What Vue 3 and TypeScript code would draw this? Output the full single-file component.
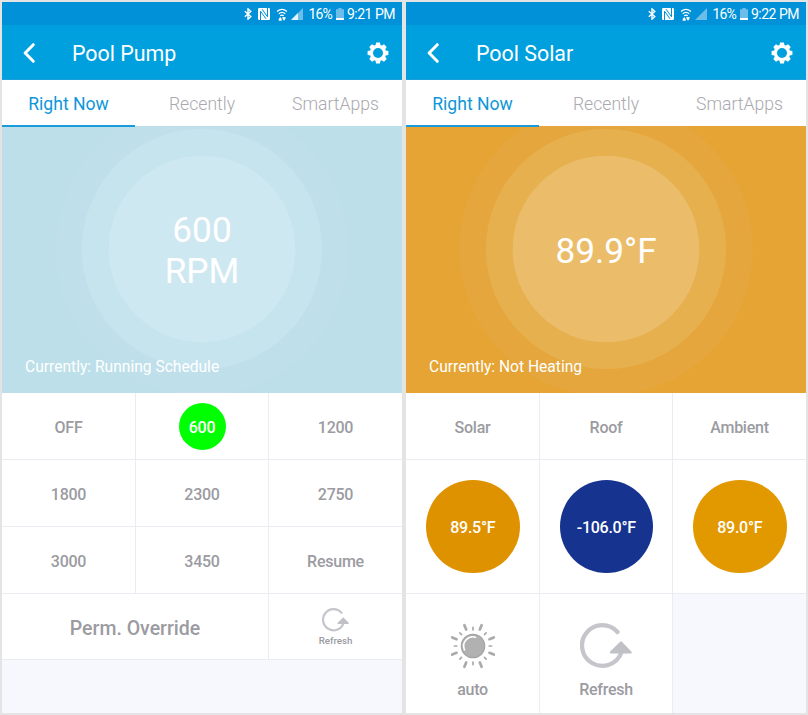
<script setup lang="ts">
interface Tile {
  label: string
  kind?: 'dot' | 'disc' | 'wide' | 'refresh' | 'sun'
  tone?: string
}

interface Device {
  id: string
  title: string
  time: string
  signal: boolean
  reading: string[]
  status: string
  tiles: Tile[]
}

const tabs: string[] = ['Right Now', 'Recently', 'SmartApps']

const devices: Device[] = [
  {
    id: 'pump',
    title: 'Pool Pump',
    time: '9:21 PM',
    signal: true,
    reading: ['600', 'RPM'],
    status: 'Currently: Running Schedule',
    tiles: [
      { label: 'OFF' },
      { label: '600', kind: 'dot' },
      { label: '1200' },
      { label: '1800' },
      { label: '2300' },
      { label: '2750' },
      { label: '3000' },
      { label: '3450' },
      { label: 'Resume' },
      { label: 'Perm. Override', kind: 'wide' },
      { label: 'Refresh', kind: 'refresh' },
    ],
  },
  {
    id: 'solar',
    title: 'Pool Solar',
    time: '9:22 PM',
    signal: false,
    reading: ['89.9°F'],
    status: 'Currently: Not Heating',
    tiles: [
      { label: 'Solar' },
      { label: 'Roof' },
      { label: 'Ambient' },
      { label: '89.5°F', kind: 'disc', tone: 'amber' },
      { label: '-106.0°F', kind: 'disc', tone: 'navy' },
      { label: '89.0°F', kind: 'disc', tone: 'gold' },
      { label: 'auto', kind: 'sun' },
      { label: 'Refresh', kind: 'refresh' },
    ],
  },
]

const longRays: number[] = [22.5, 67.5, 112.5, 157.5, 202.5, 247.5, 292.5, 337.5]
const shortRays: number[] = [0, 45, 90, 135, 180, 225, 270, 315]
const teeth: number[] = [0, 45, 90, 135, 180, 225, 270, 315]
</script>

<template>
  <main class="board">
    <section v-for="d in devices" :key="d.id" class="phone" :class="d.id">
      <div class="status">
        <svg class="bt" viewBox="0 0 8 12" width="8" height="12">
          <path d="M.8 3.200 6.800 8.600 4 11.200V.8l2.800 2.600L.8 8.800" fill="none" stroke="#fff" stroke-width="1.400" />
        </svg>
        <svg class="nfc" viewBox="0 0 12 12" width="12" height="12">
          <rect width="12" height="12" rx="1.200" fill="#fff" />
          <path d="M2.500 12V3.200L8 10.800M9.500 0V8.800L4 1.200" fill="none" stroke="#0091d9" stroke-width="1" />
        </svg>
        <svg class="wifi" viewBox="0 0 12 13" width="12" height="13">
          <g fill="none" stroke="#fff" stroke-width="1.300">
            <path d="M1 3.500Q6-.8 11 3.500" />
            <path d="M2.700 5.800Q6 3 9.300 5.800" />
            <path d="M4.300 7.800Q6 6.500 7.700 7.800" />
          </g>
          <path d="M2.700 11 4.200 9l1.500 2v1.700h-3zM6.500 9h3v1.700L8 12.700l-1.500-2z" fill="#fff" />
        </svg>
        <svg class="cell" viewBox="0 0 12 12" width="12" height="12">
          <path d="M0 12 12 0V12z" fill="#6dbdea" />
          <path v-if="d.signal" d="M0 12 7 5V12z" fill="#e4f4fc" />
        </svg>
        <span class="pct">16%</span>
        <svg class="battery" viewBox="0 0 8 12" width="8" height="12">
          <path d="M2.300 0h3.400v1.200H8V12H0V1.200h2.300z" fill="#6dbdea" />
          <path d="M0 10h8v2H0z" fill="#fff" />
        </svg>
        <span class="clock">{{ d.time }}</span>
      </div>

      <header class="bar">
        <svg class="back" viewBox="0 0 14 22" width="14" height="22">
          <path d="M11.300 2.700 3.100 11l8.200 8.300" fill="none" stroke="#fff" stroke-width="3" stroke-linecap="round" stroke-linejoin="round" />
        </svg>
        <h1>{{ d.title }}</h1>
        <svg class="gear" viewBox="-11 -11 22 22" width="22" height="22">
          <circle r="6.600" fill="none" stroke="#fff" stroke-width="3.200" />
          <path v-for="a in teeth" :key="a" d="M-2.600-7.500-1.900-10.400H1.900L2.600-7.500z" fill="#fff" :transform="`rotate(${a})`" />
        </svg>
      </header>

      <nav class="tabs">
        <span v-for="(t, i) in tabs" :key="t" class="tab" :class="{ active: i === 0 }">{{ t }}</span>
      </nav>

      <div class="hero">
        <svg class="rings" viewBox="0 0 400 267" width="400" height="267">
          <circle class="outer" cx="200" cy="123" r="146.700" />
          <circle class="middle" cx="200" cy="123" r="120" />
          <circle class="inner" cx="200" cy="123" r="93.300" />
        </svg>
        <div class="reading">
          <span v-for="r in d.reading" :key="r">{{ r }}</span>
        </div>
        <p class="state">{{ d.status }}</p>
      </div>

      <div class="tiles">
        <div v-for="(t, i) in d.tiles" :key="i" class="tile" :class="[t.kind, t.tone]">
          <svg v-if="t.kind === 'refresh'" class="icon" viewBox="0 0 52 46">
            <path d="M37.500 9A20.300 20.300 0 1 0 41.200 30" fill="none" stroke="#c5c5cb" stroke-width="4.300" stroke-linecap="round" />
            <path d="M41 19.500 50.500 29.300H31z" fill="#c0c0c7" stroke="#c0c0c7" stroke-width="2.400" stroke-linejoin="round" />
          </svg>
          <svg v-if="t.kind === 'sun'" class="icon" viewBox="-23 -23 46 46">
            <circle r="11.700" fill="#b1b1b1" stroke="#a3a3a3" stroke-width="1.200" />
            <path d="M-8.500 3.800A9.200 9.200 0 0 1 2.500-8.800" fill="none" stroke="#fff" stroke-width="1.700" stroke-linecap="round" />
            <path v-for="a in longRays" :key="a" d="M0-17.800V-22.500" stroke="#aaa" stroke-width="2.700" stroke-linecap="round" :transform="`rotate(${a})`" />
            <path v-for="a in shortRays" :key="a" d="M0-16.200V-18.600" stroke="#aaa" stroke-width="1.700" stroke-linecap="round" :transform="`rotate(${a})`" />
          </svg>
          <span class="label">{{ t.label }}</span>
        </div>
      </div>
    </section>
  </main>
</template>

<style>
body {
  margin: 0;
}
</style>

<style scoped>
.board {
  box-sizing: border-box;
  display: flex;
  gap: 4px;
  width: 808px;
  height: 715px;
  padding: 2px;
  overflow: hidden;
  background: #e4e4e4;
  font-family: Roboto, "Liberation Sans", sans-serif;
}

.phone {
  display: flex;
  flex-direction: column;
  width: 400px;
  height: 711px;
  overflow: hidden;
  background: #f7f8fe;
}

.status {
  display: flex;
  align-items: center;
  justify-content: flex-end;
  box-sizing: border-box;
  height: 23px;
  flex: none;
  padding: 1px 7px 0 0;
  background: #0091d9;
  color: #fff;
  font-size: 14px;
  line-height: 22px;
}

.nfc {
  margin-left: 6px;
}

.wifi {
  margin-left: 6px;
}

.cell {
  margin-left: 3px;
}

.pct {
  margin-left: 5px;
  letter-spacing: -0.8px;
}

.battery {
  margin-left: 4px;
}

.clock {
  margin-left: 3px;
  letter-spacing: -0.5px;
}

.bar {
  display: flex;
  align-items: center;
  box-sizing: border-box;
  height: 55px;
  flex: none;
  padding: 1px 13px 0 20px;
  background: #00a0de;
  border-bottom: 1px solid #1c9fdb;
  color: #fff;
}

.bar h1 {
  flex: 1;
  margin: 0 0 0 36px;
  padding-top: 2px;
  font-size: 21.4px;
  font-weight: 400;
  line-height: 30px;
}

.tabs {
  display: grid;
  grid-template-columns: 133px 134px 133px;
  grid-template-rows: 46px;
  height: 46px;
  flex: none;
  background: #fff;
}

.tab {
  box-sizing: border-box;
  height: 46px;
  color: #a9a9af;
  font-size: 17.6px;
  font-weight: 300;
  line-height: 49px;
  text-align: center;
}

.tab.active {
  z-index: 1;
  height: 47px;
  border-bottom: 2px solid #1a9bd9;
  color: #0d97d8;
  font-weight: 400;
}

.hero {
  position: relative;
  z-index: 0;
  display: flex;
  flex-direction: column;
  height: 267px;
  flex: none;
  color: #fff;
}

.rings {
  position: absolute;
  inset: 0;
}

.pump .hero {
  background: #bddfe9;
}

.pump .outer {
  fill: #bfe0ea;
}

.pump .middle {
  fill: #c6e4ee;
}

.pump .inner {
  fill: #cee8f1;
}

.solar .hero {
  background: #e5a433;
}

.solar .outer {
  fill: #e5a73d;
}

.solar .middle {
  fill: #e7b04f;
}

.solar .inner {
  fill: #ebbd6b;
}

.reading {
  position: relative;
  display: flex;
  flex-direction: column;
  align-items: center;
  justify-content: center;
  height: 250px;
  flex: none;
  font-size: 35.2px;
  line-height: 41px;
}

.state {
  position: relative;
  margin: -20px 0 0 23px;
  font-size: 15.6px;
  line-height: 22px;
}

.tiles {
  display: grid;
  grid-template-columns: 133px 132px 133px;
  grid-template-rows: 66px 66px 66px 65px;
  gap: 1px;
}

.solar .tiles {
  grid-template-rows: 66px 133px 119px;
}

.tile {
  display: flex;
  flex-direction: column;
  align-items: center;
  justify-content: center;
  background: #fff;
  box-shadow: 0 0 0 1px #ebecf2;
  color: #9b9ba1;
  font-size: 16px;
  font-weight: 500;
  letter-spacing: -0.25px;
  line-height: 20px;
}

.label {
  padding: 4px 0 0;
}

.wide {
  grid-column: span 2;
  font-size: 19.5px;
  letter-spacing: 0;
}

.dot .label,
.disc .label {
  display: grid;
  place-items: center;
  box-sizing: border-box;
  padding-top: 2px;
  border-radius: 50%;
  color: #fff;
}

.dot .label {
  width: 47px;
  height: 47px;
  margin-top: 1px;
  background: #0f0;
}

.disc .label {
  width: 93.6px;
  height: 93.6px;
  margin-left: 0.6px;
  background: #df9200;
}

.disc.navy .label {
  background: #16338f;
}

.disc.gold .label {
  background: #e29900;
}

.refresh .icon {
  width: 52px;
  height: 46px;
  margin-bottom: 11px;
}

.refresh .label,
.sun .label {
  padding-top: 0;
}

.pump .refresh {
  font-size: 9.7px;
  letter-spacing: 0;
  line-height: 12px;
}

.pump .refresh .icon {
  width: 27px;
  height: 24px;
  margin: 1px 0 3px;
}

.solar .refresh,
.solar .sun {
  box-sizing: border-box;
  justify-content: flex-start;
  padding-top: 29px;
}

.sun .icon {
  width: 46px;
  height: 46px;
  margin-bottom: 11px;
}
</style>
